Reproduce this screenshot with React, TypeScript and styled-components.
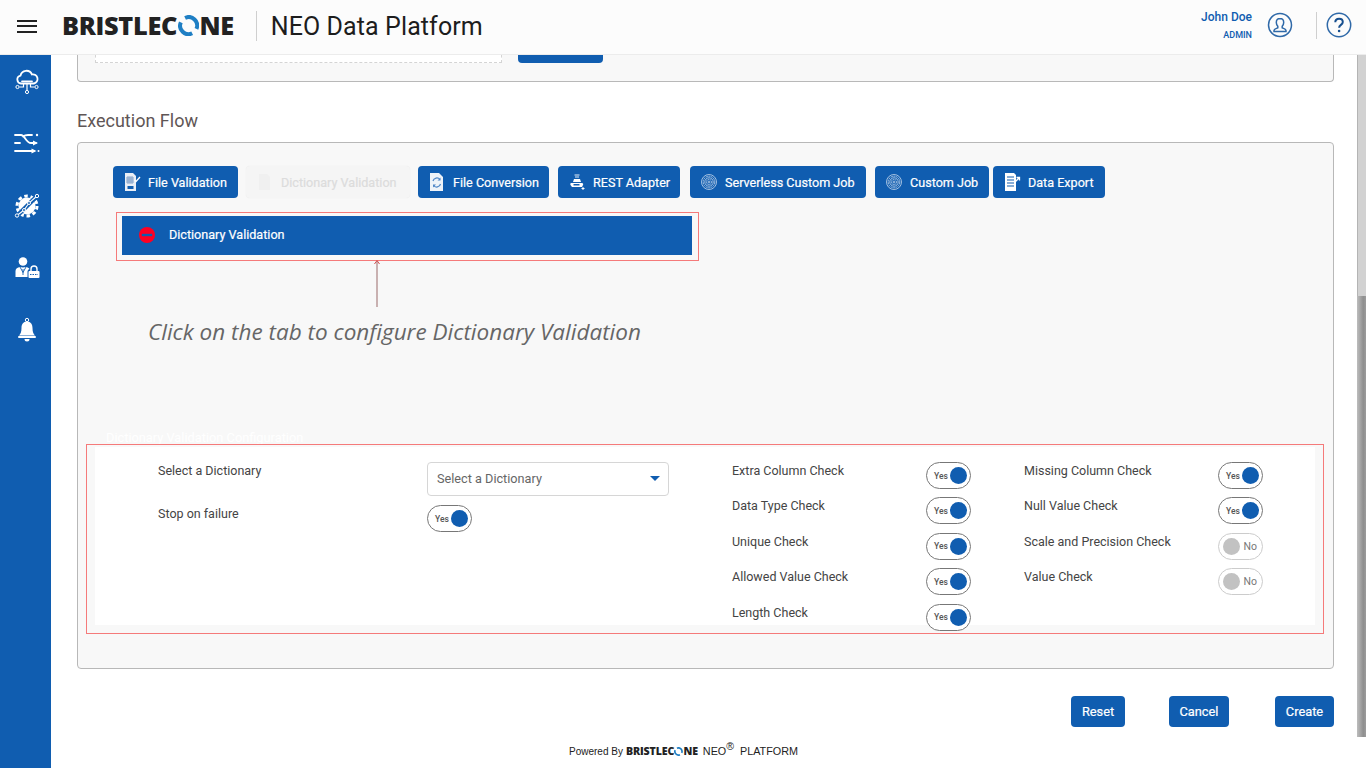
import React from "react";
import styled, { createGlobalStyle } from "styled-components";

const BLUE = "#105db0";

const GlobalStyle = createGlobalStyle`
  html, body {
    margin: 0;
    padding: 0;
    background: #fff;
    overflow: hidden;
    font-family: Roboto, "Liberation Sans", sans-serif;
  }
  * {
    box-sizing: border-box;
  }
`;

const Page = styled.div`
  position: relative;
  width: 1366px;
  height: 768px;
  overflow: hidden;
  background: #fff;
`;

/* header */
const Header = styled.header`
  position: absolute;
  top: 0;
  left: 0;
  z-index: 3;
  width: 100%;
  height: 55px;
  display: flex;
  align-items: center;
  background: #fcfcfc;
  border-bottom: 1px solid #ececec;
`;

const Burger = styled.div`
  width: 20px;
  height: 13px;
  margin: -2px 25px 0 17px;
  border-top: 2px solid #222;
  border-bottom: 2px solid #222;
  position: relative;
  &::after {
    content: "";
    position: absolute;
    left: 0;
    right: 0;
    top: 3.5px;
    height: 2px;
    background: #222;
  }
`;

const LogoWrap = styled.div<{ $size: number; $top?: number }>`
  display: inline-flex;
  align-items: center;
  margin-top: ${(p) => p.$top ?? 0}px;
  font-family: "Open Sans", "Liberation Sans", sans-serif;
  font-weight: 800;
  font-size: ${(p) => p.$size}px;
  letter-spacing: -0.012em;
  line-height: 1;
  color: #222;
  svg {
    width: 0.84em;
    height: 0.84em;
    margin: 0 0.02em;
  }
`;

const Divider = styled.div`
  width: 1px;
  height: 30px;
  background: #cfcfcf;
  margin: -3px 0 0 22px;
`;

const AppTitle = styled.div`
  margin: -2px 0 0 14px;
  font-size: 25px;
  letter-spacing: 0.1px;
  color: #1d1d1d;
`;

const UserBox = styled.div`
  margin-left: auto;
  margin-right: 15px;
  text-align: right;
  color: ${BLUE};
  font-weight: 500;
`;

const UserName = styled.div`
  font-size: 12px;
  line-height: 14px;
  margin-top: -3px;
`;

const UserRole = styled.div`
  font-size: 9px;
  line-height: 11px;
  margin-top: 6px;
`;

const HeaderIcon = styled.svg`
  width: 26px;
  height: 26px;
  margin-top: -4px;
  flex: none;
`;

const HelpIcon = styled(HeaderIcon)`
  margin-right: 14px;
`;

const HeaderSep = styled.div`
  width: 1px;
  height: 27px;
  background: #cfcfcf;
  margin: -4px 9px 0 23px;
`;

/* sidebar */
const Sidebar = styled.nav`
  position: absolute;
  top: 0;
  left: 0;
  z-index: 2;
  width: 51px;
  height: 768px;
  background: ${BLUE};
  padding-top: 69px;
  display: flex;
  flex-direction: column;
  align-items: center;
  gap: 36px;
  svg {
    width: 26px;
    height: 26px;
    margin-left: 2px;
    flex: none;
  }
`;

/* scrollbar */
const Scrollbar = styled.div`
  position: absolute;
  top: 55px;
  right: 0;
  width: 9px;
  height: 682px;
  background: linear-gradient(90deg, #bdbdbd, #8f8f8f 70%, #9c9c9c);
  &::before {
    content: "";
    display: block;
    height: 241px;
    background: #d2d2d2;
    border-left: 1px solid #b4b4b4;
  }
`;

/* main */
const Main = styled.main`
  position: absolute;
  top: 0;
  left: 77px;
  width: 1257px;
`;

const TopCard = styled.section`
  height: 82px;
  padding: 0 0 18px 17px;
  display: flex;
  align-items: flex-end;
  gap: 16px;
  background: #f8f8f8;
  border: 1px solid #b8b8b8;
  border-top: 0;
  border-radius: 0 0 4px 4px;
`;

const DropZone = styled.div`
  width: 407px;
  height: 30px;
  background: #fff;
  border: 1px dashed #d4d4d4;
`;

const UploadButton = styled.div`
  width: 85px;
  height: 30px;
  background: ${BLUE};
  border-radius: 4px;
`;

const SectionTitle = styled.h2`
  margin: 28px 0 11px;
  font-size: 18px;
  line-height: 21px;
  font-weight: 400;
  color: #5f5656;
`;

const FlowCard = styled.section`
  position: relative;
  height: 527px;
  padding: 23px 0 0 35px;
  background: #f8f8f8;
  border: 1px solid #b8b8b8;
  border-radius: 4px;
`;

const TabRow = styled.div`
  display: flex;
`;

const TabButton = styled.div<{ $w: number; $gap?: number; $off?: boolean }>`
  width: ${(p) => p.$w}px;
  height: 32px;
  margin-left: ${(p) => p.$gap ?? 0}px;
  padding-left: 10px;
  display: flex;
  align-items: center;
  gap: 7px;
  font-size: 12.6px;
  font-weight: 400;
  -webkit-text-stroke: 0.2px currentColor;
  white-space: nowrap;
  border-radius: 4px;
  color: ${(p) => (p.$off ? "#dcdcdc" : "#fff")};
  background: ${(p) => (p.$off ? "#f5f5f5" : BLUE)};
  box-shadow: ${(p) => (p.$off ? "0 0 1px #e4e4e4" : "none")};
  svg {
    width: 18px;
    height: 18px;
    flex: none;
  }
`;

const Highlight = styled.div`
  position: absolute;
  border: 1px solid #f57a7a;
`;

const TabHighlight = styled(Highlight)`
  left: 38px;
  top: 69px;
  width: 583px;
  height: 49px;
  padding: 3px 6px 4px 5px;
`;

const ActiveBar = styled.div`
  height: 39px;
  padding: 0 0 2px 17px;
  display: flex;
  align-items: center;
  gap: 14px;
  background: ${BLUE};
  color: #fff;
  font-size: 12.6px;
  font-weight: 400;
  -webkit-text-stroke: 0.2px currentColor;
  svg {
    width: 16px;
    height: 16px;
  }
`;

const Arrow = styled.svg`
  position: absolute;
  left: 294px;
  top: 116px;
  width: 10px;
  height: 48px;
`;

const Annotation = styled.div`
  position: absolute;
  left: 70px;
  top: 173px;
  font-family: "Open Sans", "Liberation Sans", sans-serif;
  font-style: italic;
  font-size: 22.5px;
  line-height: 32px;
  color: #666;
  white-space: nowrap;
`;

const GhostTitle = styled.div`
  position: absolute;
  left: 28px;
  top: 287px;
  font-size: 12.8px;
  font-weight: 400;
  color: #fff;
`;

const ConfigHighlight = styled(Highlight)`
  left: 8px;
  top: 301px;
  width: 1238px;
  height: 190px;
  padding: 2px 8px 7px 8px;
`;

const ConfigPanel = styled.div`
  position: relative;
  height: 178px;
  background: #fff;
`;

const Column = styled.div<{ $left: number; $w: number }>`
  position: absolute;
  left: ${(p) => p.$left}px;
  top: 15px;
  width: ${(p) => p.$w}px;
`;

const Field = styled.div<{ $h: number }>`
  height: ${(p) => p.$h}px;
  display: flex;
  justify-content: space-between;
  align-items: flex-start;
`;

const GeneralField = styled.div<{ $h: number }>`
  height: ${(p) => p.$h}px;
  display: grid;
  grid-template-columns: 269px auto;
  align-items: start;
`;

const FieldLabel = styled.span`
  font-size: 12.5px;
  line-height: 18px;
  color: #444;
  white-space: nowrap;
`;

const SelectBox = styled.div`
  width: 242px;
  height: 34px;
  padding: 0 8px 2px 9px;
  display: flex;
  align-items: center;
  justify-content: space-between;
  font-size: 12.7px;
  color: #666;
  background: #fff;
  border: 1px solid #d6d6d6;
  border-radius: 4px;
  &::after {
    content: "";
    border-left: 5px solid transparent;
    border-right: 5px solid transparent;
    border-top: 5px solid ${BLUE};
  }
`;

const SwitchTrack = styled.div<{ $on: boolean }>`
  width: 45px;
  height: 27px;
  padding: 0 ${(p) => (p.$on ? 3.5 : 5)}px 0 ${(p) => (p.$on ? 7 : 4)}px;
  display: flex;
  align-items: center;
  justify-content: space-between;
  flex-direction: ${(p) => (p.$on ? "row" : "row-reverse")};
  background: #fff;
  border: 1px solid ${(p) => (p.$on ? "#777" : "#ccc")};
  border-radius: 14px;
  font-size: ${(p) => (p.$on ? 8.5 : 10.5)}px;
  font-weight: ${(p) => (p.$on ? 500 : 400)};
  color: ${(p) => (p.$on ? "#555" : "#777")};
  &::after {
    content: "";
    width: 17px;
    height: 17px;
    border-radius: 50%;
    background: ${(p) => (p.$on ? BLUE : "#c2c2c2")};
  }
`;

const Actions = styled.div`
  position: relative;
  height: 31px;
  margin-top: 27px;
`;

const ActionButton = styled.div<{ $left: number; $w: number }>`
  position: absolute;
  left: ${(p) => p.$left}px;
  width: ${(p) => p.$w}px;
  height: 31px;
  display: flex;
  align-items: center;
  justify-content: center;
  font-size: 12.8px;
  font-weight: 400;
  -webkit-text-stroke: 0.2px currentColor;
  color: #fff;
  background: ${BLUE};
  border-radius: 4px;
`;

const Footer = styled.footer`
  position: absolute;
  left: 569px;
  top: 743px;
  display: flex;
  align-items: center;
  height: 16px;
  font-family: "Liberation Sans", Arial, sans-serif;
  font-size: 10px;
  color: #222;
  white-space: nowrap;
`;

const FooterLogo = styled.span`
  margin: 1px 5px 0 3px;
  display: inline-flex;
`;

const FooterNeo = styled.span`
  font-size: 10.8px;
  sup {
    font-size: 10.5px;
    line-height: 0;
  }
`;

const Logo = ({ size, top }: { size: number; top?: number }) => (
  <LogoWrap $size={size} $top={top}>
    BRISTLEC
    <svg viewBox="0 0 24 24">
      <path d="M8 3.300A9.500 9.500 0 0 1 20.800 15.700" fill="none" stroke="#1f7fc4" strokeWidth="4.500" />
      <path d="M16 20.700A9.500 9.500 0 0 1 3.200 8.300" fill="none" stroke="#1f7fc4" strokeWidth="4.500" />
    </svg>
    NE
  </LogoWrap>
);

const Line = { stroke: "#fff", strokeWidth: 1.8, fill: "none", strokeLinecap: "round" } as const;

const CloudIcon = () => (
  <svg viewBox="0 0 26 26">
    <path {...Line} d="M7 14.5a4 4 0 0 1-.5-7.900 6 6 0 0 1 11.400-1.200 4.600 4.600 0 0 1 2 9.100z" />
    <path {...Line} d="M8 12.300h10" />
    <path d="M13 14.500v7M9.500 14.500v3.500h-4M16.500 14.500v3.500h4" stroke="#fff" strokeWidth="1.200" fill="none" />
    <circle cx="3.500" cy="18" r="1.600" stroke="#fff" fill="none" />
    <circle cx="22.500" cy="18" r="1.600" stroke="#fff" fill="none" />
    <circle cx="13" cy="23" r="1.600" stroke="#fff" fill="none" />
  </svg>
);

const ShuffleIcon = () => (
  <svg viewBox="0 0 26 26">
    <path {...Line} d="M1 4h6c4 0 5 8 10 8h5M1 12h5M9 5.500c2-1.500 3-1.500 5-1.500h4M1 20h19" />
    <path fill="#fff" d="M19 9.500l5 2.500-5 2.500zM17.500 17.500l5 2.500-5 2.500z" />
    <circle cx="23" cy="4" r="1.200" fill="#fff" />
    <circle cx="24.500" cy="20" r="1" fill="#fff" />
  </svg>
);

const GearIcon = () => (
  <svg viewBox="0 0 26 26">
    <circle cx="13" cy="13" r="8.500" fill="#fff" />
    <circle cx="13" cy="13" r="10" fill="none" stroke="#fff" strokeWidth="3" strokeDasharray="3.500 2.800" />
    <path stroke={BLUE} strokeWidth="4.500" fill="none" d="M2 24L24 2" />
    <path stroke="#fff" strokeWidth="1.100" fill="none" d="M3 22.500L10 17l5-7 8-7" />
    <circle cx="3" cy="22.500" r="1.700" fill={BLUE} stroke="#fff" />
    <circle cx="10" cy="17" r="1.500" fill={BLUE} stroke="#fff" />
    <circle cx="15" cy="10" r="1.500" fill={BLUE} stroke="#fff" />
    <circle cx="23" cy="3" r="1.700" fill={BLUE} stroke="#fff" />
  </svg>
);

const UserLockIcon = () => (
  <svg viewBox="0 0 26 26">
    <circle cx="9" cy="6.500" r="4.300" fill="#fff" />
    <path fill="#fff" d="M1.500 22v-6c0-2.500 2-3.500 4.500-4l3 .5 3-.5c1.500.3 3 .8 3.500 2-1.500.5-2 1.500-2 3v5z" />
    <path stroke={BLUE} strokeWidth=".9" fill="none" d="M6 12l3 5.500 3-5.500M9 14v6" />
    <path d="M17 16v-2a3 3 0 0 1 6 0v2" stroke="#fff" strokeWidth="1.400" fill="none" />
    <rect x="14.500" y="16" width="11" height="7" rx="1" fill="#fff" />
    <path d="M16 19.500h8" stroke={BLUE} strokeWidth="1" strokeDasharray="1.500 1" />
  </svg>
);

const BellIcon = () => (
  <svg viewBox="0 0 26 26">
    <circle cx="13" cy="3" r="1.700" stroke="#fff" strokeWidth="1" fill="none" />
    <path fill="#fff" d="M13 4.500c4 0 5.500 3 5.500 6.500 0 4 1 6 2.500 7.500H5c1.500-1.500 2.500-3.500 2.500-7.500C7.500 7.500 9 4.500 13 4.500z" />
    <rect x="4" y="19" width="18" height="2" rx="1" fill="#fff" />
    <path fill="#fff" d="M10.500 22h5a2.500 2.500 0 0 1-5 0z" />
  </svg>
);

const FileCheckIcon = () => (
  <svg viewBox="0 0 18 18">
    <path fill="#e9eef6" d="M2 0h8l3 3v15H2z" />
    <path stroke="#6b8fbf" strokeWidth=".8" fill="none" d="M4 4h6v6H4zM6 4v6M8 4v6M4 6h6M4 8h6" />
    <path stroke="#fff" strokeWidth="1.300" fill="none" d="M11.500 7l1.500 1.500L17 4" />
    <rect x="4.500" y="13" width="6" height="3" fill={BLUE} />
  </svg>
);

const DictIcon = () => (
  <svg viewBox="0 0 18 18">
    <path fill="#f0f0f0" d="M3 1h8l3 3v13H3z" />
  </svg>
);

const ConvertIcon = () => (
  <svg viewBox="0 0 18 18">
    <path fill="#eef3f9" d="M2 0h9l4 4v14H2z" />
    <path stroke="#4f86c6" strokeWidth="1.200" fill="none" d="M5 8a4 4 0 0 1 7-1.500M12.500 11a4 4 0 0 1-7 1.500" />
    <path fill="#4f86c6" d="M12.500 4.500v3h-3zM5 14.500v-3h3z" />
  </svg>
);

const RestIcon = () => (
  <svg viewBox="0 0 18 18">
    <path stroke="#fff" strokeWidth=".9" fill="none" d="M6.500 2h5M7 4h4" />
    <path fill="#fff" d="M6 6h6l1 3H5z" />
    <path fill="#fff" d="M3 10h11c1 0 1.500 1 1 2l-1 2H4l-1.500-2c-.5-1 0-2 .5-2z" />
    <path fill={BLUE} d="M5.500 11h6v1.500h-6z" />
    <path stroke="#fff" strokeWidth="1" d="M15 14v3M13.500 15.500h3" />
  </svg>
);

const JobIcon = () => (
  <svg viewBox="0 0 18 18">
    <g fill="none" stroke="#c7d8ec" strokeWidth=".8">
      <circle cx="9" cy="9" r="7.500" />
      <circle cx="9" cy="9" r="5.800" strokeDasharray="2 .6" />
      <circle cx="9" cy="9" r="4.200" />
      <circle cx="9" cy="9" r="2.600" strokeDasharray="1.500 .6" />
      <circle cx="9" cy="9" r="1" />
    </g>
  </svg>
);

const ExportIcon = () => (
  <svg viewBox="0 0 18 18">
    <path fill="#fff" d="M2 0h9l2 2v16H2z" />
    <path stroke={BLUE} strokeWidth="1.100" d="M4 4h7M4 7h7M4 10h7M4 13h7" />
    <path stroke="#fff" strokeWidth="1.300" fill="none" d="M12 9l4-4M13.500 4.500H16.500V7.500" />
  </svg>
);

const BlockIcon = () => (
  <svg viewBox="0 0 16 16">
    <circle cx="8" cy="8" r="8" fill="#ff0022" />
    <rect x="2.800" y="6.800" width="10.400" height="2.400" fill={BLUE} />
  </svg>
);

const tabs = [
  { label: "File Validation", w: 125, gap: 0, icon: <FileCheckIcon /> },
  { label: "Dictionary Validation", w: 164, gap: 8, icon: <DictIcon />, off: true },
  { label: "File Conversion", w: 131, gap: 8, icon: <ConvertIcon /> },
  { label: "REST Adapter", w: 122, gap: 9, icon: <RestIcon /> },
  { label: "Serverless Custom Job", w: 176, gap: 10, icon: <JobIcon /> },
  { label: "Custom Job", w: 114, gap: 9, icon: <JobIcon /> },
  { label: "Data Export", w: 112, gap: 4, icon: <ExportIcon /> },
];

const middleChecks: [string, boolean][] = [
  ["Extra Column Check", true],
  ["Data Type Check", true],
  ["Unique Check", true],
  ["Allowed Value Check", true],
  ["Length Check", true],
];

const rightChecks: [string, boolean][] = [
  ["Missing Column Check", true],
  ["Null Value Check", true],
  ["Scale and Precision Check", false],
  ["Value Check", false],
];

const CheckColumn = ({ left, w, items }: { left: number; w: number; items: [string, boolean][] }) => (
  <Column $left={left} $w={w}>
    {items.map(([label, on]) => (
      <Field $h={35.4} key={label}>
        <FieldLabel>{label}</FieldLabel>
        <SwitchTrack $on={on}>{on ? "Yes" : "No"}</SwitchTrack>
      </Field>
    ))}
  </Column>
);

export default function App() {
  return (
    <Page>
      <GlobalStyle />
      <Header>
        <Burger />
        <Logo size={25.3} top={-3} />
        <Divider />
        <AppTitle>NEO Data Platform</AppTitle>
        <UserBox>
          <UserName>John Doe</UserName>
          <UserRole>ADMIN</UserRole>
        </UserBox>
        <HeaderIcon viewBox="0 0 26 26">
          <circle cx="13" cy="13" r="11.500" fill="none" stroke="#2f69a8" strokeWidth="1.500" />
          <path fill="none" stroke="#2f69a8" strokeWidth="1.500" d="M13 6.500c-2.500 0-3.700 1.800-3.700 4 0 1.800.8 3 1.500 3.800v1.500c-1.500.8-3.800 1-3.800 2.700v1h12v-1c0-1.700-2.300-1.900-3.800-2.700v-1.500c.7-.8 1.500-2 1.500-3.800 0-2.200-1.200-4-3.700-4z" />
        </HeaderIcon>
        <HeaderSep />
        <HelpIcon viewBox="0 0 26 26">
          <circle cx="13" cy="13" r="11.700" fill="none" stroke="#2f69a8" strokeWidth="1.500" />
          <path fill="none" stroke="#174f8f" strokeWidth="2" d="M9.300 10.200c0-2.200 1.700-3.500 3.800-3.500s3.700 1.300 3.700 3.300c0 2.900-3.700 2.900-3.700 5.700" />
          <circle cx="13.100" cy="19" r="1.300" fill="#174f8f" />
        </HelpIcon>
      </Header>

      <Sidebar>
        <CloudIcon />
        <ShuffleIcon />
        <GearIcon />
        <UserLockIcon />
        <BellIcon />
      </Sidebar>

      <Main>
        <TopCard>
          <DropZone />
          <UploadButton />
        </TopCard>

        <SectionTitle>Execution Flow</SectionTitle>

        <FlowCard>
          <TabRow>
            {tabs.map((t) => (
              <TabButton key={t.label} $w={t.w} $gap={t.gap} $off={t.off}>
                {t.icon}
                {t.label}
              </TabButton>
            ))}
          </TabRow>

          <TabHighlight>
            <ActiveBar>
              <BlockIcon />
              Dictionary Validation
            </ActiveBar>
          </TabHighlight>

          <Arrow viewBox="0 0 10 48">
            <path d="M5 48V2" stroke="#9a6a6a" strokeWidth="1" fill="none" />
            <path d="M2.500 5L5 1.500 7.500 5" stroke="#d05050" strokeWidth="1" fill="none" />
          </Arrow>

          <Annotation>Click on the tab to configure Dictionary Validation</Annotation>

          <GhostTitle>Dictionary Validation Configuration</GhostTitle>

          <ConfigHighlight>
            <ConfigPanel>
              <Column $left={63} $w={511}>
                <GeneralField $h={43}>
                  <FieldLabel>Select a Dictionary</FieldLabel>
                  <SelectBox>Select a Dictionary</SelectBox>
                </GeneralField>
                <GeneralField $h={30}>
                  <FieldLabel>Stop on failure</FieldLabel>
                  <SwitchTrack $on>Yes</SwitchTrack>
                </GeneralField>
              </Column>
              <CheckColumn left={637} w={239} items={middleChecks} />
              <CheckColumn left={929} w={239} items={rightChecks} />
            </ConfigPanel>
          </ConfigHighlight>
        </FlowCard>

        <Actions>
          <ActionButton $left={994} $w={54}>Reset</ActionButton>
          <ActionButton $left={1092} $w={60}>Cancel</ActionButton>
          <ActionButton $left={1198} $w={59}>Create</ActionButton>
        </Actions>
      </Main>

      <Scrollbar />

      <Footer>
        Powered By
        <FooterLogo>
          <Logo size={10.6} />
        </FooterLogo>
        <FooterNeo>
          NEO<sup>®</sup>&nbsp; PLATFORM
        </FooterNeo>
      </Footer>
    </Page>
  );
}
